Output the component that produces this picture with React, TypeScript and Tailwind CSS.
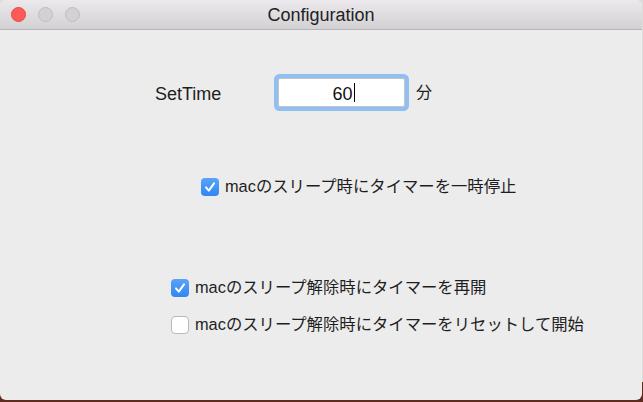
import React from "react";

const font = { fontFamily: '"Liberation Sans", "Noto Sans CJK JP", sans-serif' };

function Check({ checked }: { checked: boolean }) {
  if (checked) {
    return (
      <div className="w-[18px] h-[18px] rounded-[4px] bg-[linear-gradient(to_bottom,#5aa3f8,#2f86f4)] flex items-center justify-center shrink-0">
        <svg width="14" height="14" viewBox="0 0 14 14">
          <path d="M3 7.4 L5.8 10.6 L11 3.4" fill="none" stroke="#ffffff" strokeWidth="2" strokeLinecap="round" strokeLinejoin="round" />
        </svg>
      </div>
    );
  }
  return <div className="w-[18px] h-[18px] rounded-[4px] bg-white border border-[#b9b9b9] shrink-0" />;
}

function Row({ checked, label, className }: { checked: boolean; label: string; className: string }) {
  return (
    <div className={"flex items-center gap-[6px] h-[19px] " + className}>
      <Check checked={checked} />
      <span className="text-[16.35px] leading-none text-[#1e1e1e] whitespace-nowrap">{label}</span>
    </div>
  );
}

export default function App() {
  return (
    <div className="w-[643px] h-[402px] bg-[linear-gradient(to_bottom,#dcdcdc_0%,#dcdcdc_95%,#5e2b1e_95%)] overflow-hidden" style={font}>
      <div className="w-[642px] h-[400px] rounded-[6px] overflow-hidden bg-[#ececec] flex flex-col">
        <div className="h-[30px] shrink-0 bg-[linear-gradient(to_bottom,#ebe9eb,#d3d1d3)] border-b border-[#b6b4b6] relative flex items-center">
          <div className="flex items-center gap-[12px] pl-[11px]">
            <div className="w-[15px] h-[15px] rounded-full bg-[#fc5b57] border border-[#e5473f]" />
            <div className="w-[15px] h-[15px] rounded-full bg-[#d3d1d3] border border-[#bfbdbf]" />
            <div className="w-[15px] h-[15px] rounded-full bg-[#d3d1d3] border border-[#bfbdbf]" />
          </div>
          <div className="absolute inset-0 flex items-center justify-center text-[18px] text-[#222] pt-[1px]">
            Configuration
          </div>
        </div>
        <div className="flex flex-col">
          <div className="flex items-center mt-[48px] h-[29px] pl-[155px]">
            <span className="text-[18px] leading-none text-[#1e1e1e] w-[123px] pt-[3px]">SetTime</span>
            <div className="w-[127px] h-[29px] bg-white border border-[#c4c4c4] rounded-[2px] shadow-[0_0_0_4px_#93bef1] flex items-center justify-center">
              <span className="text-[18px] leading-none text-[#111] pt-[2px] pl-[4px]">60</span>
              <span className="w-[1px] h-[19px] bg-black ml-[1px]" />
            </div>
            <span className="text-[16px] leading-none text-[#1e1e1e] ml-[11px]">分</span>
          </div>
          <Row checked={true} label="macのスリープ時にタイマーを一時停止" className="ml-[201px] mt-[70px]" />
          <Row checked={true} label="macのスリープ解除時にタイマーを再開" className="ml-[171px] mt-[82px]" />
          <Row checked={false} label="macのスリープ解除時にタイマーをリセットして開始" className="ml-[171px] mt-[18px]" />
        </div>
      </div>
    </div>
  );
}
